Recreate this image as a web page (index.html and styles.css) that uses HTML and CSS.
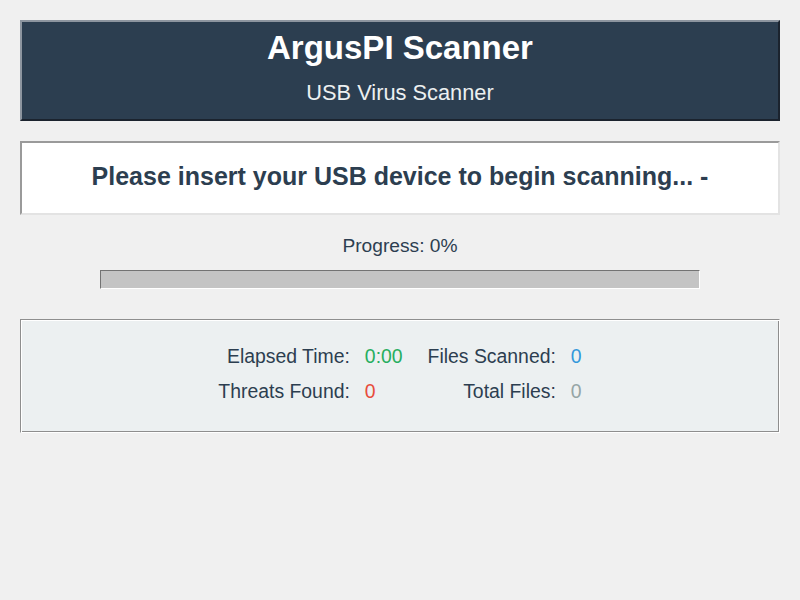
FILE: index.html
```html
<!DOCTYPE html>
<html>
<head>
<meta charset="utf-8">
<title>ArgusPI Scanner</title>
<link rel="stylesheet" href="styles.css">
</head>
<body>
<div class="app">
  <header class="header">
    <h1 class="title">ArgusPI Scanner</h1>
    <div class="subtitle">USB Virus Scanner</div>
  </header>
  <section class="status">
    <div class="status-text">Please insert your USB device to begin scanning... -</div>
  </section>
  <div class="progress-label">Progress: 0%</div>
  <div class="progress-bar"><div class="progress-fill" style="width:0%"></div></div>
  <section class="stats">
    <div class="stats-inner">
      <div class="stat-label">Elapsed Time:</div>
      <div class="stat-value green">0:00</div>
      <div class="stat-label second">Files Scanned:</div>
      <div class="stat-value blue">0</div>
      <div class="stat-label">Threats Found:</div>
      <div class="stat-value red">0</div>
      <div class="stat-label second">Total Files:</div>
      <div class="stat-value grey">0</div>
    </div>
  </section>
</div>
</body>
</html>
```
FILE: styles.css
```css
html, body {
  margin: 0;
  padding: 0;
  background: #f0f0f0;
}
body {
  font-family: "Liberation Sans", Arial, sans-serif;
  color: #2c3e50;
}
.app {
  padding: 20px;
  display: flex;
  flex-direction: column;
}
.header {
  background: #2c3e50;
  border-style: solid;
  border-width: 2px;
  border-color: #8d959f #1b232e #1b232e #8d959f;
  padding: 7px 0 14px;
  text-align: center;
}
.title {
  margin: 0;
  font-size: 33px;
  line-height: 37px;
  font-weight: bold;
  color: #ffffff;
}
.subtitle {
  margin-top: 14px;
  font-size: 21.8px;
  line-height: 25px;
  color: #ecf0f1;
}
.status {
  margin-top: 20px;
  background: #ffffff;
  border-style: solid;
  border-width: 2px;
  border-color: #9a9a9a #e3e3e3 #e3e3e3 #9a9a9a;
  box-sizing: border-box;
  height: 74px;
  padding-bottom: 5px;
  display: flex;
  align-items: center;
  justify-content: center;
}
.status-text {
  font-size: 25px;
  font-weight: bold;
  line-height: 30px;
}
.progress-label {
  margin-top: 20px;
  text-align: center;
  font-size: 19.2px;
  line-height: 22px;
}
.progress-bar {
  align-self: center;
  margin-top: 13px;
  width: 598px;
  height: 17px;
  background: #c4c4c4;
  border-style: solid;
  border-width: 1px;
  border-color: #737373 #ffffff #ffffff #737373;
}
.progress-fill {
  height: 100%;
  background: #2c3e50;
}
.stats {
  margin-top: 30px;
  background: #ecf0f1;
  border-style: solid;
  border-width: 1px;
  border-color: #8e8e8e #ffffff #ffffff #8e8e8e;
  box-shadow: inset 1px 1px 0 #ffffff, inset -1px -1px 0 #8e8e8e;
  padding: 25px 0 30px;
}
.stats-inner {
  display: grid;
  grid-template-columns: auto auto auto auto;
  justify-content: center;
  row-gap: 13px;
  font-size: 19.4px;
  line-height: 22px;
}
.stat-label {
  text-align: right;
}
.stat-label.second {
  margin-left: 25px;
}
.stat-value {
  margin-left: 15px;
  text-align: left;
}
.green { color: #27ae60; }
.blue { color: #3498db; }
.red { color: #e74c3c; }
.grey { color: #95a5a6; }
```
